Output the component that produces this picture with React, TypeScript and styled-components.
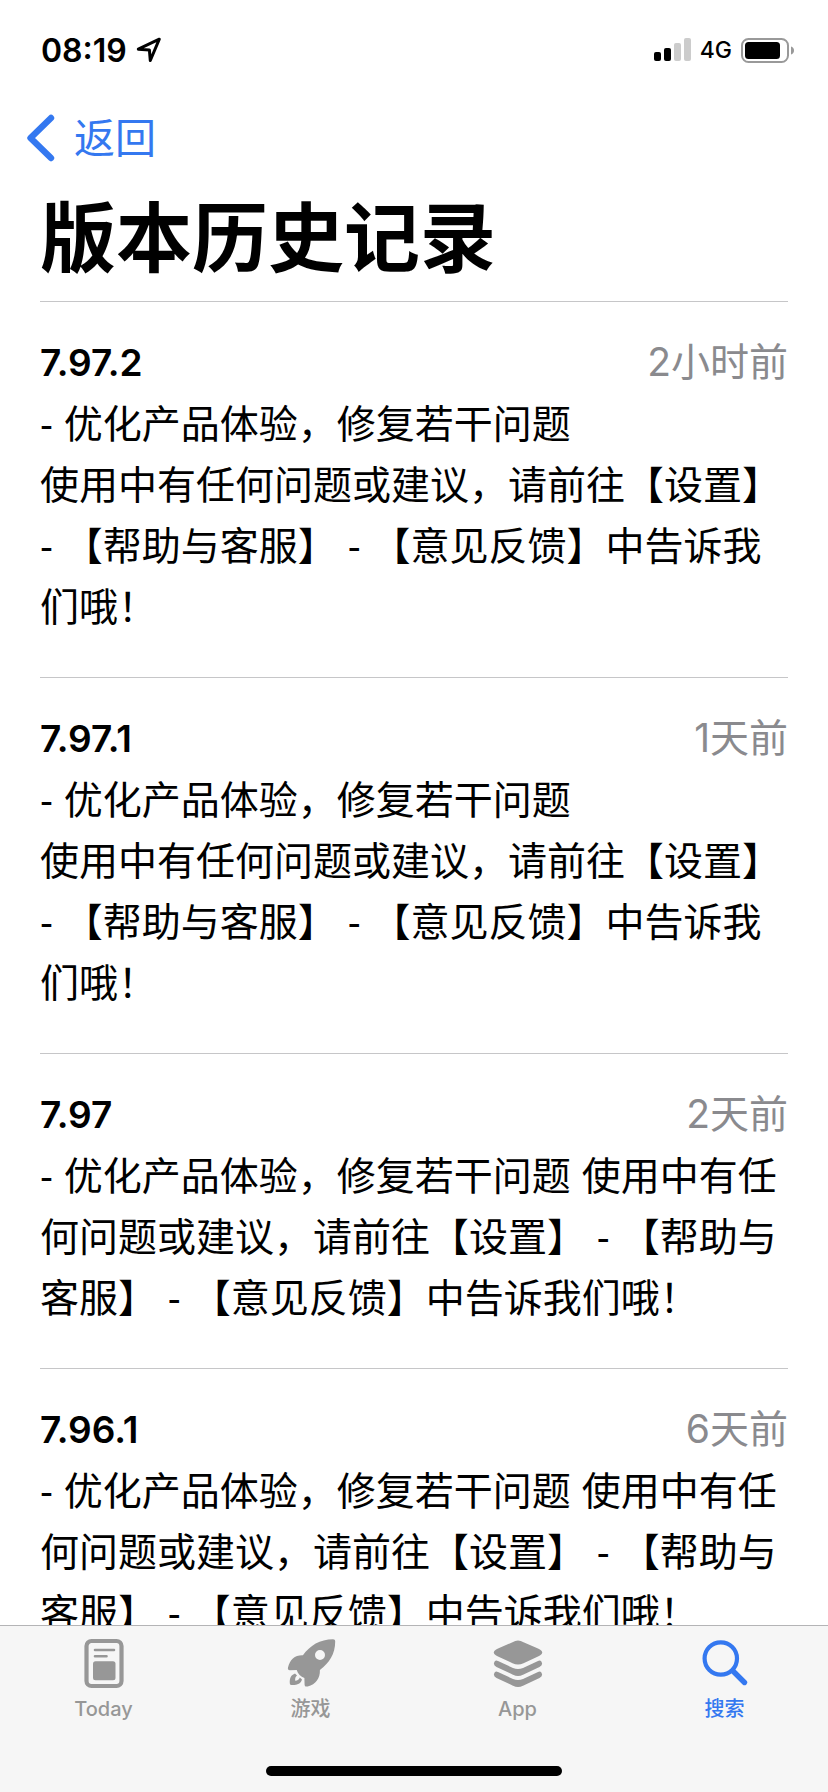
import React from 'react';
import styled, { createGlobalStyle } from 'styled-components';

const GlobalStyle = createGlobalStyle`
  *, *::before, *::after { box-sizing: border-box; }
  body {
    margin: 0;
    background: #fff;
    color: #000;
    font-family: Inter, "Noto Sans CJK SC", sans-serif;
  }
`;

const Screen = styled.div`
  display: flex;
  flex-direction: column;
  height: 100vh;
  overflow: hidden;
`;

const StatusBar = styled.div`
  display: flex;
  align-items: center;
  justify-content: space-between;
  flex: none;
  height: 40px;
  margin-top: 30px;
  padding: 0 34px 0 41px;
`;

const StatusGroup = styled.div`
  display: flex;
  align-items: center;
  gap: 9px;
`;

const Clock = styled.time`
  font-size: 32px;
  font-weight: 600;
`;

const Network = styled.span`
  font-size: 23px;
  font-weight: 500;
`;

const NavBar = styled.nav`
  display: flex;
  flex: none;
  height: 64px;
  margin-top: 36px;
  padding: 0 26px;
`;

const BackButton = styled.button`
  display: flex;
  align-items: center;
  gap: 19px;
  padding: 0;
  border: 0;
  background: none;
  color: #3478f0;
  font: inherit;
  font-size: 41px;
  line-height: 62px;
  cursor: pointer;
`;

const Content = styled.main`
  flex: 1;
  min-height: 0;
  padding: 0 40px;
  overflow-y: auto;
  scrollbar-width: none;
`;

const Title = styled.h1`
  margin: 0;
  padding: 22px 0 17px;
  font-size: 76px;
  font-weight: 600;
  line-height: 92px;
`;

const Release = styled.article`
  padding: 36px 0 39px;
  border-top: 1px solid #c6c6c8;
`;

const ReleaseHeader = styled.header`
  display: flex;
  align-items: baseline;
  justify-content: space-between;
  margin-bottom: 7px;
  line-height: 48px;
`;

const Version = styled.h2`
  margin: 0;
  font-size: 37px;
  font-weight: 600;
`;

const Age = styled.span`
  color: #8a8a8e;
  font-size: 39px;
`;

const Notes = styled.p`
  margin: 0;
  font-family: "Liberation Sans", "Noto Sans CJK SC", sans-serif;
  font-size: 39px;
  line-height: 61px;
  white-space: pre-line;
`;

const TabBar = styled.footer`
  flex: none;
  border-top: 1px solid #b4b4b6;
  background: #f6f6f6;
`;

const Tabs = styled.nav`
  display: grid;
  grid-template-columns: repeat(4, 1fr);
  height: 140px;
`;

const Tab = styled.a<{ $active?: boolean }>`
  display: flex;
  flex-direction: column;
  align-items: center;
  padding-top: 12px;
  color: ${({ $active }) => ($active ? '#3478f0' : '#979797')};
  font-size: 20px;
  font-weight: 500;
  line-height: 34px;
  text-decoration: none;
`;

const HomeIndicator = styled.div`
  width: 296px;
  height: 10px;
  margin: 0 auto 16px;
  border-radius: 5px;
  background: #000;
`;

const LocationIcon = () => (
  <svg width="26" height="26" viewBox="0 0 26 26" fill="none" stroke="currentColor" strokeWidth="3" strokeLinejoin="round" aria-hidden="true">
    <path d="M2.3 12.2 23.3 2.2 14.3 23.5 13.4 13z" />
  </svg>
);

const SignalIcon = () => (
  <svg width="37" height="24" viewBox="0 0 37 24" aria-hidden="true">
    <rect x="0" y="14" width="7" height="9" rx="2" />
    <rect x="10" y="10" width="7" height="13" rx="2" />
    <rect x="20" y="5" width="7" height="18" rx="2" fill="#ccc" />
    <rect x="30" y="0" width="7" height="23" rx="2" fill="#ccc" />
  </svg>
);

const BatteryIcon = () => (
  <svg width="53" height="25" viewBox="0 0 53 25" aria-hidden="true">
    <rect x="1" y="1" width="46" height="23" rx="6.5" fill="none" stroke="#999" strokeWidth="2" />
    <rect x="4" y="4" width="35" height="17" rx="3.5" />
    <path d="M50 8.5c1.8.4 3 2 3 4s-1.2 3.6-3 4z" fill="#999" />
  </svg>
);

const ChevronIcon = () => (
  <svg width="29" height="48" viewBox="0 0 29 48" fill="none" stroke="currentColor" strokeWidth="6.4" strokeLinecap="round" strokeLinejoin="round" aria-hidden="true">
    <path d="M25 4 4.5 24 25 44" />
  </svg>
);

const TodayIcon = () => (
  <svg width="54" height="54" viewBox="0 0 54 54" fill="none" stroke="currentColor" aria-hidden="true">
    <rect x="9.5" y="3" width="35" height="45" rx="5" strokeWidth="4.2" />
    <path d="M18 12h19M18 18.300h11.500" strokeWidth="2.6" strokeLinecap="round" />
    <rect x="16" y="23.300" width="22.500" height="19" rx="2.5" fill="currentColor" stroke="none" />
  </svg>
);

const RocketIcon = () => (
  <svg width="54" height="54" viewBox="0 0 54 54" fill="currentColor" aria-hidden="true">
    <path fillRule="evenodd" d="M49 1.2c1.5 0 2.200.8 2.200 2.300 0 12.500-6 21.500-15.300 28.500.3 8-4 14.500-12.200 16.500-2 .4-3-.2-3.100-1.800l-.2-6.700c-3.600-1.200-6.500-4.200-7.700-8l-6.800.3c-1.600 0-2.300-1-1.900-2.700C5.700 21.500 11 16.900 18.900 17.200 26 7.500 36 1.200 49 1.200zM36 12a5 5 0 1 0 0 10 5 5 0 0 0 0-10z" />
    <path d="M11 35.500C7 37 5.500 40 5.800 45.500Q6 47 7.500 47C13 47.300 17 45.500 18 41.500L15.800 39.500Q15 42.500 11.200 42.800 10.800 39 13 37.500z" />
  </svg>
);

const LayersIcon = () => (
  <svg width="54" height="54" viewBox="0 0 54 54" fill="currentColor" aria-hidden="true">
    <path d="M21.5 4.200Q27 .6 32.500 4.200L47 10.500Q55.500 14.500 47 18.500L32.500 25.200Q27 28 21.500 25.200L7 18.500Q-1.500 14.500 7 10.500z" />
    <path d="M3 25q1-3.500 4-2l15 7q5 2 10 0l15-7q3-1.500 4 2 .5 2.500-2.500 4L32 36.700q-5 2.500-10 0L5.500 29Q2.500 27.500 3 25z" />
    <path d="M3 36q1-3.500 4-2l15 7q5 2 10 0l15-7q3-1.500 4 2 .5 2.500-2.500 4L32 47.700q-5 2.500-10 0L5.500 40Q2.500 38.500 3 36z" />
  </svg>
);

const SearchIcon = () => (
  <svg width="54" height="54" viewBox="0 0 54 54" fill="none" stroke="currentColor" strokeLinecap="round" aria-hidden="true">
    <circle cx="22.8" cy="20.500" r="16.200" strokeWidth="4.200" />
    <path d="m35 33 11.500 11.500" strokeWidth="5.400" />
  </svg>
);

const SUMMARY = '- 优化产品体验，修复若干问题';
const FEEDBACK = '使用中有任何问题或建议，请前往【设置】 - 【帮助与客服】 - 【意见反馈】中告诉我们哦！';

const releases = [
  { version: '7.97.2', age: '2小时前', notes: `${SUMMARY}\n${FEEDBACK}` },
  { version: '7.97.1', age: '1天前', notes: `${SUMMARY}\n${FEEDBACK}` },
  { version: '7.97', age: '2天前', notes: `${SUMMARY} ${FEEDBACK}` },
  { version: '7.96.1', age: '6天前', notes: `${SUMMARY} ${FEEDBACK}` },
];

const tabs = [
  { label: 'Today', Icon: TodayIcon },
  { label: '游戏', Icon: RocketIcon },
  { label: 'App', Icon: LayersIcon },
  { label: '搜索', Icon: SearchIcon, active: true },
];

export default function App() {
  return (
    <Screen lang="zh-CN">
      <GlobalStyle />
      <StatusBar>
        <StatusGroup>
          <Clock>08:19</Clock>
          <LocationIcon />
        </StatusGroup>
        <StatusGroup>
          <SignalIcon />
          <Network>4G</Network>
          <BatteryIcon />
        </StatusGroup>
      </StatusBar>
      <NavBar>
        <BackButton type="button">
          <ChevronIcon />
          返回
        </BackButton>
      </NavBar>
      <Content>
        <Title>版本历史记录</Title>
        {releases.map(({ version, age, notes }) => (
          <Release key={version}>
            <ReleaseHeader>
              <Version>{version}</Version>
              <Age>{age}</Age>
            </ReleaseHeader>
            <Notes>{notes}</Notes>
          </Release>
        ))}
      </Content>
      <TabBar>
        <Tabs>
          {tabs.map(({ label, Icon, active }) => (
            <Tab key={label} href="#" $active={active} aria-current={active ? 'page' : undefined}>
              <Icon />
              {label}
            </Tab>
          ))}
        </Tabs>
        <HomeIndicator />
      </TabBar>
    </Screen>
  );
}
